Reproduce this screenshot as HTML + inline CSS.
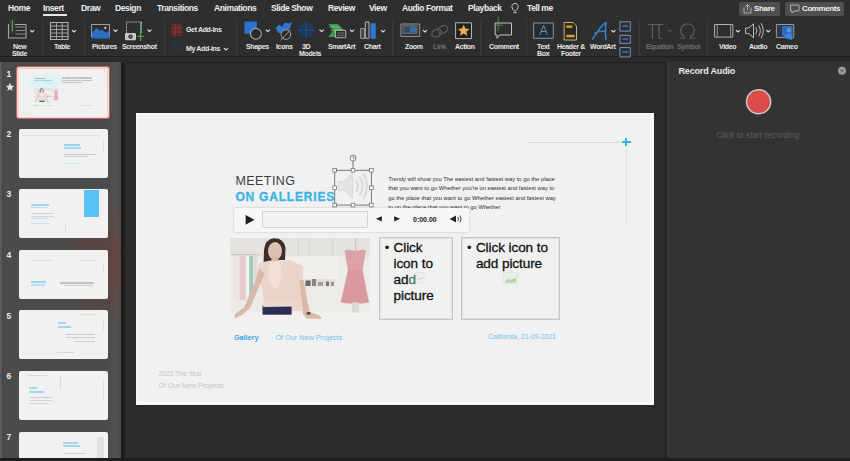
<!DOCTYPE html>
<html><head><meta charset="utf-8">
<style>
*{margin:0;padding:0;box-sizing:border-box}
html,body{width:850px;height:461px;overflow:hidden;background:#2a2a2a;font-family:"Liberation Sans",sans-serif;position:relative}
.a{position:absolute}
#ribbon{left:0;top:0;width:850px;height:62px;background:#2e2e2e}
.tab{position:absolute;top:3px;font-size:8.5px;line-height:10px;color:#efefef;font-weight:bold;white-space:nowrap;letter-spacing:-0.4px}
.lbl{position:absolute;font-size:7px;color:#e8e8e8;font-weight:bold;white-space:nowrap;line-height:7px;letter-spacing:-0.35px}
.dis{color:#6e6e6e}
.sep{position:absolute;top:20px;width:1px;height:35.5px;background:#3b3b3b}
#left{left:0;top:62px;width:121px;height:399px;background:#4b4b4b}
.th{position:absolute;left:19.2px;width:88.6px;height:49.2px;background:#f1f1f1;border-radius:2px;overflow:hidden}
.num{position:absolute;left:6.5px;font-size:8.5px;color:#ececec;font-weight:bold}
#slide{left:136px;top:113px;width:518px;height:292px;background:#f1f1f1;overflow:hidden}
#right{left:666px;top:62px;width:184px;height:399px;background:#333333;border-left:1.5px solid #1c1c1c;box-shadow:inset 2px 0 0 #383838}
.st{position:absolute;white-space:nowrap}
</style></head><body>
<div id="ribbon" class="a">
  <div class="a" style="left:0;top:55.5px;width:850px;height:1.6px;background:#1f1f1f"></div>
  <div class="a" style="left:0;top:57px;width:850px;height:4.5px;background:#2b2b2b"></div>
  <div class="a" style="left:0;top:61.5px;width:850px;height:1px;background:#1e1e1e"></div>
  <div class="tab" style="left:8px">Home</div>
  <div class="tab" style="left:43px">Insert</div>
  <div class="a" style="left:43px;top:14px;width:24px;height:2px;background:#e6e6e6"></div>
  <div class="tab" style="left:81px">Draw</div>
  <div class="tab" style="left:115px">Design</div>
  <div class="tab" style="left:157px">Transitions</div>
  <div class="tab" style="left:214px">Animations</div>
  <div class="tab" style="left:271px">Slide Show</div>
  <div class="tab" style="left:328px">Review</div>
  <div class="tab" style="left:369px">View</div>
  <div class="tab" style="left:402px">Audio Format</div>
  <div class="tab" style="left:468px">Playback</div>
  <div class="tab" style="left:527px">Tell me</div>
  <!-- share/comments -->
  <div class="a" style="left:739px;top:2px;width:41px;height:14px;background:#4f4f4f;border-radius:2px"></div>
  <div class="a" style="left:785px;top:2px;width:59px;height:14px;background:#4f4f4f;border-radius:2px"></div>
  <div class="tab" style="left:754px;top:4px;font-size:8px;letter-spacing:-0.3px">Share</div>
  <div class="tab" style="left:802px;top:4px;font-size:8px;letter-spacing:-0.4px">Comments</div>

  <!-- separators -->
  <div class="sep" style="left:42px"></div>
  <div class="sep" style="left:84px"></div>
  <div class="sep" style="left:164px"></div>
  <div class="sep" style="left:236px"></div>
  <div class="sep" style="left:392px"></div>
  <div class="sep" style="left:480px"></div>
  <div class="sep" style="left:526px"></div>
  <div class="sep" style="left:639px"></div>
  <div class="sep" style="left:707px"></div>

  <!-- labels -->
  <div class="lbl" style="left:13px;top:43.2px">New</div>
  <div class="lbl" style="left:12px;top:50.2px">Slide</div>
  <div class="lbl" style="left:54px;top:43.2px">Table</div>
  <div class="lbl" style="left:92px;top:43.2px">Pictures</div>
  <div class="lbl" style="left:122px;top:43.2px">Screenshot</div>
  <div class="lbl" style="left:186px;top:26.4px">Get Add-ins</div>
  <div class="lbl" style="left:186px;top:45px">My Add-ins</div>
  <div class="lbl" style="left:246px;top:43.2px">Shapes</div>
  <div class="lbl" style="left:276px;top:43.2px">Icons</div>
  <div class="lbl" style="left:302px;top:43.2px">3D</div>
  <div class="lbl" style="left:299px;top:50.2px">Models</div>
  <div class="lbl" style="left:328px;top:43.2px">SmartArt</div>
  <div class="lbl" style="left:364px;top:43.2px">Chart</div>
  <div class="lbl" style="left:405px;top:43.2px">Zoom</div>
  <div class="lbl dis" style="left:433px;top:43.2px">Link</div>
  <div class="lbl" style="left:455px;top:43.2px">Action</div>
  <div class="lbl" style="left:489px;top:43.2px">Comment</div>
  <div class="lbl" style="left:537px;top:43.2px">Text</div>
  <div class="lbl" style="left:537px;top:50.2px">Box</div>
  <div class="lbl" style="left:557px;top:43.2px">Header &amp;</div>
  <div class="lbl" style="left:561px;top:50.2px">Footer</div>
  <div class="lbl" style="left:590px;top:43.2px">WordArt</div>
  <div class="lbl dis" style="left:646px;top:43.2px">Equation</div>
  <div class="lbl dis" style="left:677px;top:43.2px">Symbol</div>
  <div class="lbl" style="left:719px;top:43.2px">Video</div>
  <div class="lbl" style="left:749px;top:43.2px">Audio</div>
  <div class="lbl" style="left:776px;top:43.2px">Cameo</div>
  <svg class="a" style="left:0;top:0" width="850" height="62" viewBox="0 0 850 62">
  <g fill="none" stroke-linecap="round" stroke-linejoin="round">
    <!-- chevrons -->
    <g stroke="#dadada" stroke-width="1.15">
      <path d="M30.5 30.3 L32.2 32 L33.9 30.3"/>
      <path d="M72.3 30.3 L74 32 L75.7 30.3"/>
      <path d="M113.8 29.8 L115.5 31.5 L117.2 29.8"/>
      <path d="M147.7 29.8 L149.4 31.5 L151.1 29.8"/>
      <path d="M266.1 30 L267.8 31.7 L269.5 30"/>
      <path d="M319.9 30 L321.6 31.7 L323.3 30"/>
      <path d="M350.3 30 L352 31.7 L353.7 30"/>
      <path d="M381.3 30.3 L383 32 L384.7 30.3"/>
      <path d="M423.3 30.3 L425 32 L426.7 30.3"/>
      <path d="M611.7 30.5 L613.4 32.2 L615.1 30.5"/>
      <path d="M736.3 30.3 L738 32 L739.7 30.3"/>
      <path d="M766.6 30.3 L768.3 32 L770 30.3"/>
      <path d="M224.3 48.3 L226 50 L227.7 48.3"/>
    </g>
    <!-- New slide -->
    <rect x="8.5" y="24.5" width="17.5" height="13.5" stroke="#a8a8a8" stroke-width="1.1"/>
    <path d="M16 27 H24.5 M16 30.5 H24.5 M16 34 H24.5" stroke="#8a8a8a" stroke-width="1"/>
    <rect x="9" y="19" width="6" height="14" fill="#2c3f2c" stroke="none"/>
    <path d="M12.3 20.5 V31" stroke="#7fae72" stroke-width="0.9"/>
    <!-- Table -->
    <rect x="50.5" y="22.5" width="17.5" height="17" stroke="#b0b0b0" stroke-width="1.1"/>
    <path d="M50.5 26 H68 M50.5 29.5 H68 M50.5 33 H68 M50.5 36.5 H68 M56.5 22.5 V39.5 M62.2 22.5 V39.5" stroke="#a0a0a0" stroke-width="1"/>
    <!-- Pictures -->
    <rect x="92" y="24.5" width="17.5" height="12.5" stroke="#a0a0a0" stroke-width="1"/>
    <path d="M92 36.5 L92 33 L96.5 27.8 L100 31 L102 29.5 L105.5 32.5 L109.5 31 V37.5 H92 Z" fill="#2b6fc4" stroke="none"/>
    <path d="M91.5 37.5 H110 V39 H91.5 Z" fill="#1f5aa8" stroke="none"/>
    <circle cx="105.3" cy="27.8" r="1.1" fill="#d8d8d8" stroke="none"/>
    <!-- Screenshot -->
    <path d="M126.5 34 V22 H141.5 V34" stroke="#9a9a9a" stroke-width="1" stroke-dasharray="1.6 1.4"/>
    <rect x="125" y="33" width="11" height="7.2" rx="1" fill="#c8c8c8" stroke="none"/>
    <circle cx="130.5" cy="36.6" r="2.2" fill="#2b2b2b" stroke="none"/>
    <circle cx="130.5" cy="36.6" r="1" fill="#888" stroke="none"/>
    <path d="M140.6 22.5 V40.5 M137.5 36.2 H143.8" stroke="#5fa85c" stroke-width="1.1"/>
    <!-- Get add-ins -->
    <rect x="171.5" y="24" width="11" height="12" fill="#5e2724" stroke="none"/>
    <path d="M171.5 28 H182.5 M171.5 32 H182.5 M175.2 24 V36 M178.9 24 V36" stroke="#8a3a33" stroke-width="0.9"/>
    <rect x="171.5" y="41" width="11" height="11" fill="#2a323c" stroke="none"/>
    <!-- Shapes -->
    <rect x="244.5" y="21.5" width="12.3" height="12.3" fill="#2a74cf" stroke="none"/>
    <circle cx="255.9" cy="33.8" r="5.4" fill="#2b2b2b" stroke="#a8a8a8" stroke-width="1.1"/>
    <!-- Icons -->
    <path d="M275.5 28 L279 24.5 L282 27 L285 22.5 L289 23.5 L292 22 L290.5 27 L288 31 L283 33.5 L278.5 33 Z" fill="#2f79d0" stroke="none"/>
    <circle cx="285.9" cy="34.6" r="4.8" fill="#2b2b2b" stroke="#a0a0a0" stroke-width="1"/>
    <path d="M281 40 L290.5 30" stroke="#a0a0a0" stroke-width="1"/>
    <!-- 3D models -->
    <circle cx="306.2" cy="30.2" r="8" fill="#1e3858" stroke="none"/>
    <path d="M298.5 30.2 H314 M306.2 22.5 V38" stroke="#2f4f75" stroke-width="0.9"/>
    <!-- SmartArt -->
    <path d="M328.3 24 H338 L344 30 L338 37 H328.3 L333.5 30 Z" fill="#3e9b4c" stroke="none"/>
    <path d="M330 27 H339 M331 30 H341" stroke="#8fd38a" stroke-width="0.8"/>
    <rect x="335.8" y="30.4" width="10" height="7.3" fill="#2b2b2b" stroke="#b5b5b5" stroke-width="1"/>
    <path d="M337.5 33 H344 M337.5 35.3 H344" stroke="#8a8a8a" stroke-width="0.8"/>
    <!-- Chart -->
    <rect x="361" y="28.5" width="3.5" height="9.8" fill="#444" stroke="#a8a8a8" stroke-width="0.9"/>
    <rect x="365.7" y="22" width="3.3" height="16.3" fill="#333" stroke="#c0c0c0" stroke-width="0.9"/>
    <rect x="370.5" y="23.3" width="5.3" height="15.5" fill="#2d76cf" stroke="none"/>
    <!-- Zoom -->
    <rect x="401.3" y="24" width="18.4" height="12.4" stroke="#9a9a9a" stroke-width="1"/>
    <rect x="403.5" y="25.8" width="13.5" height="7.5" fill="#3a4a5c" stroke="#7f8a95" stroke-width="0.8"/>
    <rect x="410" y="27" width="6" height="5.5" fill="#3a6aa8" stroke="none"/>
    <!-- Link -->
    <ellipse cx="436.5" cy="33" rx="5" ry="3.6" transform="rotate(-30 436.5 33)" stroke="#5a5a5a" stroke-width="1.3"/>
    <ellipse cx="443" cy="29.5" rx="5" ry="3.6" transform="rotate(-30 443 29.5)" stroke="#5a5a5a" stroke-width="1.3"/>
    <!-- Action -->
    <rect x="456" y="22.8" width="15.5" height="15.8" fill="#222" stroke="#c9c9c9" stroke-width="0.9"/>
    <path d="M463.7 24.8 L465.4 28.6 L469.4 29 L466.4 31.7 L467.3 35.7 L463.7 33.6 L460.1 35.7 L461 31.7 L458 29 L462 28.6 Z" fill="#eab14e" stroke="none"/>
    <!-- Comment -->
    <path d="M495.6 23 H511.5 V35 H499.5 L497 38.3 V35 H495.6 Z" stroke="#c4c4c4" stroke-width="1"/>
    <path d="M498.2 17 V30.5 M494 25.2 H502.5" stroke="#5b9150" stroke-width="0.9"/>
    <!-- Text box -->
    <rect x="534" y="23" width="19.3" height="15.3" fill="#1f2d38" stroke="#8696a3" stroke-width="1"/>
    <path d="M540 34.5 L543.6 25.5 L547.2 34.5 M541.3 31.5 H546" stroke="#7d8d9a" stroke-width="1"/>
    <!-- Header footer -->
    <path d="M564.5 22.5 H573 L576.5 26 V40 H564.5 Z" fill="#2a2a22" stroke="#c7b27a" stroke-width="1"/>
    <rect x="566.3" y="25.5" width="6" height="2.3" fill="#d9a13e" stroke="none"/>
    <rect x="566.3" y="34.8" width="8.3" height="2.5" fill="#d9a13e" stroke="none"/>
    <!-- WordArt -->
    <path d="M592.5 39 C597 33 601 25 606 22.5 C605 28 605 34 606 39.5 M595 33 C599 31 602 31.5 606 31" stroke="#3b7ed0" stroke-width="1.6"/>
    <!-- small column icons -->
    <rect x="620.3" y="21.8" width="10" height="9.3" fill="#223040" stroke="#8094a8" stroke-width="1"/>
    <rect x="620.3" y="35.3" width="10" height="8" fill="#223040" stroke="#8094a8" stroke-width="1"/>
    <rect x="620.3" y="47.6" width="10" height="9.3" fill="#223040" stroke="#8094a8" stroke-width="1"/>
    <path d="M622.5 26 H628 M623 39 H627.5 M622.5 52 H628" stroke="#8094a8" stroke-width="0.9"/>
    <!-- Equation -->
    <path d="M648.5 24.5 H663 M652.5 24.5 V38.5 M659 24.5 V37 Q659 38.5 661.5 38.5" stroke="#5e5e5e" stroke-width="1.2"/>
    <path d="M668 30.8 H671.2" stroke="#5e5e5e" stroke-width="1"/>
    <!-- Symbol -->
    <path d="M680 38 H684.5 V36.3 C679 34 679.5 24 687.5 24 C695.5 24 696 34 690.5 36.3 V38 H695" stroke="#5e5e5e" stroke-width="1.2"/>
    <!-- Video -->
    <rect x="715" y="24.5" width="17.8" height="12.6" stroke="#b2b2b2" stroke-width="1"/>
    <path d="M717.3 24.5 V37.1 M730.5 24.5 V37.1" stroke="#9a9a9a" stroke-width="0.9"/>
    <!-- Audio -->
    <path d="M746 28 H749 L753.5 23.8 V37.8 L749 33.6 H746 Z" stroke="#bdbdbd" stroke-width="1"/>
    <path d="M756 27.5 Q758 30.8 756 34 M758.8 25.5 Q762 30.8 758.8 36 M761.3 23.5 Q765.5 30.8 761.3 38" stroke="#bdbdbd" stroke-width="1"/>
    <!-- Cameo -->
    <rect x="776.8" y="24.5" width="17" height="13" fill="#2a3a4c" stroke="#9a9a9a" stroke-width="1"/>
    <rect x="782" y="26" width="10.5" height="10" fill="#2e6db8" stroke="none"/>
    <circle cx="789" cy="30" r="2.2" fill="#4c9aea" stroke="none"/>
    <path d="M784 38 Q786 32.5 789 33 Q792 33 792.5 40" fill="#3b85d8" stroke="none"/>
    <!-- share icon / comments icon -->
    <path d="M744 8 V13 H751 V8 M747.5 4.5 V10 M745.5 6.5 L747.5 4.5 L749.5 6.5" stroke="#bcbcbc" stroke-width="0.9"/>
    <path d="M791 5 H799 V11 H794 L792 13 V11 H791 Z" stroke="#bcbcbc" stroke-width="0.9"/>
    <!-- lightbulb -->
    <path d="M514.5 11 C511 9 511 3.5 515 3.5 C519 3.5 519 9 515.5 11 Z M513.8 12.7 H516.2" stroke="#d8d8d8" stroke-width="0.9"/>
  </g>
</svg>
</div>
<div id="left" class="a">
<div class="a" style="left:0;top:0;width:1.5px;height:399px;background:#5a5a5a"></div><div class="a" style="left:1.5px;top:0;width:1.5px;height:399px;background:#434343"></div>
<div class="a" style="left:109px;top:0;width:12px;height:399px;background:linear-gradient(90deg,rgba(255,255,255,0),rgba(255,255,255,0.04) 50%,rgba(255,255,255,0))"></div>
<div class="a" style="left:20px;top:130px;width:101px;height:130px;background:radial-gradient(ellipse 60px 70px at 92% 55%,rgba(125,55,45,0.45),rgba(125,55,45,0) 100%)"></div>
<div class="num" style="top:7.0px">1</div>
<div class="num" style="top:66.5px">2</div>
<div class="num" style="top:127.0px">3</div>
<div class="num" style="top:188.0px">4</div>
<div class="num" style="top:248.5px">5</div>
<div class="num" style="top:309.0px">6</div>
<div class="num" style="top:369.5px">7</div>
<svg class="a" style="left:4.5px;top:20px" width="10" height="10" viewBox="0 0 10 10"><path d="M5 0.8 L6.2 3.6 L9.2 3.9 L6.9 5.9 L7.6 8.9 L5 7.3 L2.4 8.9 L3.1 5.9 L0.8 3.9 L3.8 3.6 Z" fill="#e0e0e0"/></svg>
</div>
<div class="a" style="left:16.3px;top:66px;width:93.5px;height:53.3px;border:1.2px solid #c96262;border-radius:3px;background:#f3d2d0"></div>
<div class="a" style="left:19.3px;top:68.8px;width:88.2px;height:47.8px;background:#f1f1f1;overflow:hidden"><div class="a" style="left:4px;top:3px;width:46px;height:20px;background:radial-gradient(ellipse at 50% 50%,rgba(205,242,246,0.9),rgba(205,242,246,0) 75%)"></div><div class="a" style="left:0;top:0;width:518px;height:292px;transform:translate(-2.4px,-3.4px) scale(0.18);transform-origin:0 0;filter:blur(0.35px);opacity:0.75"><div class="st" style="left:99.4px;top:61.8px;font-size:12.5px;line-height:12.5px;color:#3d3d3d;letter-spacing:0.45px">MEETING</div>
<div class="st" style="left:99.4px;top:77.6px;font-size:12px;line-height:12px;color:#3cb4e6;font-weight:bold;letter-spacing:0.8px;-webkit-text-stroke:0.35px #3cb4e6">ON GALLERIES</div>
<div class="st" style="left:252.2px;top:61.5px;font-size:5.8px;line-height:9.55px;color:#2e2e2e">Trendy will show you The easiest and fastest way to go the place<br>that you want to go Whether you're on easiest and fastest way to<br>go the place that you want to go Whether easiest and fastest way<br>to go the place that you want to go Whether</div>
<div class="st" style="left:98px;top:220.8px;font-size:7.2px;line-height:7.2px;color:#3aa9df;font-weight:bold">Gallery</div>
<div class="st" style="left:139.4px;top:220.8px;font-size:7.3px;line-height:7.3px;color:#6cc3ea">Of Our New Projects</div>
<div class="st" style="left:352px;top:220.8px;font-size:6.9px;line-height:6.9px;color:#6cc3ea">California, 21-09-2021</div>
<div class="st" style="left:22.6px;top:258.2px;font-size:6.7px;line-height:6.7px;color:#c6c6c6">2022 The Year</div>
<div class="st" style="left:22.6px;top:269.6px;font-size:7.1px;line-height:7.1px;color:#c6c6c6">Of Our New Projects</div>
<div class="a" style="left:392.3px;top:29px;width:93px;height:1px;background:#dadada"></div>
<div class="a" style="left:489.7px;top:33.6px;width:1px;height:76px;background:#dedede"></div>
<div class="a" style="left:486px;top:28.2px;width:8.5px;height:1.8px;background:#3cb0e4"></div>
<div class="a" style="left:489.3px;top:24.9px;width:1.8px;height:8.5px;background:#3cb0e4"></div><svg class="a" style="left:94.4px;top:124.5px;filter:blur(0.55px)" width="140" height="81.5" viewBox="0 0 140 81.5">
  <rect width="140" height="81.5" fill="#edebe8"/>
  <rect x="0" y="0" width="140" height="18.5" fill="#e5e3e0"/>
  <rect x="68" y="0" width="1" height="18.5" fill="#d6d3cf"/>
  <rect x="79" y="0" width="1" height="18.5" fill="#d9d6d2"/>
  <rect x="102" y="0" width="1" height="18.5" fill="#d9d6d2"/>
  <rect x="56" y="18.5" width="52" height="22" fill="#f1efec"/>
  <rect x="1" y="16" width="28" height="1.2" fill="#cdc9c5"/>
  <rect x="3.5" y="18" width="4" height="42" fill="#efe4e2"/>
  <rect x="9.5" y="18" width="6" height="44" fill="#e6cccc"/>
  <rect x="16" y="18" width="3" height="40" fill="#f3f3f1"/>
  <rect x="19.3" y="18" width="3.8" height="44" fill="#9ecab8"/>
  <rect x="23.3" y="18" width="4.2" height="38" fill="#e3dcd9"/>
  <rect x="74.6" y="41" width="30" height="7.5" fill="#e3e0dc"/>
  <rect x="75.5" y="42.5" width="5" height="5.5" fill="#6d6864"/>
  <rect x="82" y="41" width="4" height="7" fill="#8c8680"/>
  <rect x="88" y="44" width="5" height="4" fill="#a6a09b"/>
  <rect x="96" y="43.5" width="3" height="4.5" fill="#7a7570"/>
  <rect x="101" y="44" width="3" height="4" fill="#9a948f"/>
  <rect x="0" y="74.5" width="140" height="7" fill="#f3f1ef"/>
  <!-- mannequin & dress -->
  <rect x="125" y="0" width="1.3" height="13" fill="#cbc6c2"/>
  <path d="M114.6 12.5 L119 11.5 Q125.6 14 132 11.5 L136 12.5 L132.5 33 L118 33 Z" fill="#dba1a7"/>
  <path d="M118 32 L132.5 32 L139 64.5 Q125 67 110.6 64.5 Z" fill="#d9999f"/>
  <rect x="122" y="64.5" width="7" height="10" fill="#dcd8d4"/>
  <!-- woman -->
  <path d="M33.4 29.5 L34 12 Q35 1 44 0.2 Q54 0 55.5 10 L55 22 L50 22 L40 24 L38 30 Z" fill="#3e2d29"/>
  <ellipse cx="45" cy="13" rx="7" ry="9" fill="#e0c1b1"/>
  <rect x="41.5" y="19" width="7" height="6" fill="#d8b5a4"/>
  <path d="M29 40 L28.6 25 L40 22.5 L50 23 L60 22 L72.8 28 L73 48 L71 73 L34.5 73 L32 50 Z" fill="#ebd4ca"/>
  <path d="M40 24 L50 24 L53 40 L45 52 L38 40 Z" fill="#f1e0d8"/>
  <path d="M29 30 L34.5 36 L20 70 L12 77 L4.6 80.5 L5 76 L14 69.5 L25 44 Z" fill="#dbb9a8"/>
  <path d="M69.5 42 L73.5 42 L79.5 74 L90 77.5 L91.5 81 L77 80.5 L73 76 Z" fill="#dab8a7"/>
  <rect x="76.8" y="74" width="3.6" height="2.6" fill="#5b4c42"/>
  <path d="M32.5 67.3 L61.6 67.3 L61.6 76.7 L32.5 76.7 Z" fill="#2c2f52"/>
  <path d="M34 64 L66 64 L66 68.5 L33 69 Z" fill="#ecd8cf"/>
</svg>
</div></div>
<div class="th" style="top:128.6px"><div class="a" style="left:0;top:0;width:89px;height:50px;opacity:0.78;filter:blur(0.3px)"><div class="a" style="left:45px;top:15.5px;width:16px;height:2px;background:#7ccbec"></div><div class="a" style="left:45px;top:18.5px;width:17px;height:2px;background:#8fd3f0"></div><div class="a" style="left:45px;top:25px;width:32px;height:1.2px;background:#bdbdbd"></div><div class="a" style="left:45px;top:27.5px;width:24px;height:1.2px;background:#c8c8c8"></div><div class="a" style="left:45px;top:34.5px;width:18px;height:1px;background:#c9e6f3"></div><div class="a" style="left:3px;top:6.5px;width:77px;height:0.6px;background:#e0e0e0"></div><div class="a" style="left:84px;top:10px;width:0.8px;height:14px;background:#dedede"></div></div></div>
<div class="th" style="top:189px"><div class="a" style="left:0;top:0;width:89px;height:50px;opacity:0.78;filter:blur(0.3px)"><div class="a" style="left:65px;top:0.7px;width:15px;height:27px;background:#2bb6f3"></div><div class="a" style="left:12px;top:14.5px;width:18px;height:2px;background:#8fd0ee"></div><div class="a" style="left:12px;top:17.5px;width:16px;height:1.5px;background:#a8daf1"></div><div class="a" style="left:12px;top:24px;width:23px;height:1px;background:#c8c8c8"></div><div class="a" style="left:12px;top:26.5px;width:23px;height:1px;background:#cdcdcd"></div><div class="a" style="left:12px;top:29px;width:16px;height:1px;background:#d0d0d0"></div><div class="a" style="left:12px;top:34px;width:19px;height:1px;background:#b9e0f2"></div><div class="a" style="left:46px;top:35px;width:0.8px;height:9px;background:#d8d8d8"></div></div></div>
<div class="th" style="top:249.6px"><div class="a" style="left:0;top:0;width:89px;height:50px;opacity:0.78;filter:blur(0.3px)"><div class="a" style="left:14px;top:10px;width:19px;height:1px;background:#d6d6d6"></div><div class="a" style="left:60px;top:10px;width:16px;height:1px;background:#d6d6d6"></div><div class="a" style="left:12px;top:31.5px;width:15px;height:1.8px;background:#86cdee"></div><div class="a" style="left:12px;top:34.5px;width:14px;height:1.5px;background:#a9dbf1"></div><div class="a" style="left:40.5px;top:32.5px;width:34px;height:1.5px;background:#b5b5b5"></div><div class="a" style="left:45px;top:35px;width:29px;height:1.2px;background:#c4c4c4"></div><div class="a" style="left:84px;top:12px;width:0.8px;height:12px;background:#dedede"></div></div></div>
<div class="th" style="top:310.2px"><div class="a" style="left:0;top:0;width:89px;height:50px;opacity:0.78;filter:blur(0.3px)"><div class="a" style="left:38.5px;top:12px;width:8px;height:2px;background:#8fd0ee"></div><div class="a" style="left:38.5px;top:15.5px;width:13px;height:2px;background:#8fd0ee"></div><div class="a" style="left:47px;top:24px;width:29px;height:1.3px;background:#bfbfbf"></div><div class="a" style="left:47px;top:27px;width:29px;height:1.3px;background:#c6c6c6"></div><div class="a" style="left:55px;top:31px;width:21px;height:1.2px;background:#cbcbcb"></div><div class="a" style="left:38px;top:42px;width:17px;height:1px;background:#d0d0d0"></div><div class="a" style="left:61px;top:4px;width:15px;height:1px;background:#d8d8d8"></div><div class="a" style="left:84px;top:10px;width:0.8px;height:12px;background:#dedede"></div></div></div>
<div class="th" style="top:371px"><div class="a" style="left:0;top:0;width:89px;height:50px;opacity:0.78;filter:blur(0.3px)"><div class="a" style="left:10px;top:16px;width:8px;height:2px;background:#8fd0ee"></div><div class="a" style="left:10px;top:19.5px;width:15px;height:2px;background:#8fd0ee"></div><div class="a" style="left:11px;top:26px;width:22px;height:1.2px;background:#c4c4c4"></div><div class="a" style="left:11px;top:29px;width:22px;height:1.2px;background:#c9c9c9"></div><div class="a" style="left:11px;top:32px;width:18px;height:1.2px;background:#cdcdcd"></div><div class="a" style="left:8px;top:4px;width:20px;height:1px;background:#d6d6d6"></div><div class="a" style="left:40.5px;top:5px;width:0.8px;height:14px;background:#d4d4d4"></div><div class="a" style="left:84px;top:8px;width:0.8px;height:22px;background:#dedede"></div></div></div>
<div class="th" style="top:431.6px"><div class="a" style="left:0;top:0;width:89px;height:50px;opacity:0.78;filter:blur(0.3px)"><div class="a" style="left:44px;top:10px;width:15px;height:2px;background:#8fd0ee"></div><div class="a" style="left:44px;top:13.5px;width:17px;height:2px;background:#8fd0ee"></div><div class="a" style="left:78px;top:5px;width:7px;height:25px;background:#dcdcdc"></div><div class="a" style="left:45px;top:21px;width:22px;height:1px;background:#cccccc"></div></div></div>
<div class="a" style="left:121px;top:62px;width:2px;height:399px;background:#1b1b1b"></div><div class="a" style="left:123px;top:62px;width:3px;height:399px;background:#222"></div>
<div class="a" style="left:126px;top:62px;width:1px;height:399px;background:#303030"></div>
<div id="slide" class="a"><div class="a" style="left:0;top:0;width:518px;height:292px;box-shadow:inset 1.5px 1.5px 0 #f9f9f9,inset -4px -3.5px 0 #f7f7f7"></div><div class="st" style="left:99.4px;top:61.8px;font-size:12.5px;line-height:12.5px;color:#3d3d3d;letter-spacing:0.45px">MEETING</div>
<div class="st" style="left:99.4px;top:77.6px;font-size:12px;line-height:12px;color:#3cb4e6;font-weight:bold;letter-spacing:0.8px;-webkit-text-stroke:0.35px #3cb4e6">ON GALLERIES</div>
<div class="st" style="left:252.2px;top:61.5px;font-size:5.8px;line-height:9.55px;color:#2e2e2e">Trendy will show you The easiest and fastest way to go the place<br>that you want to go Whether you're on easiest and fastest way to<br>go the place that you want to go Whether easiest and fastest way<br>to go the place that you want to go Whether</div>
<div class="st" style="left:98px;top:220.8px;font-size:7.2px;line-height:7.2px;color:#3aa9df;font-weight:bold">Gallery</div>
<div class="st" style="left:139.4px;top:220.8px;font-size:7.3px;line-height:7.3px;color:#6cc3ea">Of Our New Projects</div>
<div class="st" style="left:352px;top:220.8px;font-size:6.9px;line-height:6.9px;color:#6cc3ea">California, 21-09-2021</div>
<div class="st" style="left:22.6px;top:258.2px;font-size:6.7px;line-height:6.7px;color:#c6c6c6">2022 The Year</div>
<div class="st" style="left:22.6px;top:269.6px;font-size:7.1px;line-height:7.1px;color:#c6c6c6">Of Our New Projects</div>
<div class="a" style="left:392.3px;top:29px;width:93px;height:1px;background:#dadada"></div>
<div class="a" style="left:489.7px;top:33.6px;width:1px;height:76px;background:#dedede"></div>
<div class="a" style="left:486px;top:28.2px;width:8.5px;height:1.8px;background:#3cb0e4"></div>
<div class="a" style="left:489.3px;top:24.9px;width:1.8px;height:8.5px;background:#3cb0e4"></div><svg class="a" style="left:94.4px;top:124.5px;filter:blur(0.55px)" width="140" height="81.5" viewBox="0 0 140 81.5">
  <rect width="140" height="81.5" fill="#edebe8"/>
  <rect x="0" y="0" width="140" height="18.5" fill="#e5e3e0"/>
  <rect x="68" y="0" width="1" height="18.5" fill="#d6d3cf"/>
  <rect x="79" y="0" width="1" height="18.5" fill="#d9d6d2"/>
  <rect x="102" y="0" width="1" height="18.5" fill="#d9d6d2"/>
  <rect x="56" y="18.5" width="52" height="22" fill="#f1efec"/>
  <rect x="1" y="16" width="28" height="1.2" fill="#cdc9c5"/>
  <rect x="3.5" y="18" width="4" height="42" fill="#efe4e2"/>
  <rect x="9.5" y="18" width="6" height="44" fill="#e6cccc"/>
  <rect x="16" y="18" width="3" height="40" fill="#f3f3f1"/>
  <rect x="19.3" y="18" width="3.8" height="44" fill="#9ecab8"/>
  <rect x="23.3" y="18" width="4.2" height="38" fill="#e3dcd9"/>
  <rect x="74.6" y="41" width="30" height="7.5" fill="#e3e0dc"/>
  <rect x="75.5" y="42.5" width="5" height="5.5" fill="#6d6864"/>
  <rect x="82" y="41" width="4" height="7" fill="#8c8680"/>
  <rect x="88" y="44" width="5" height="4" fill="#a6a09b"/>
  <rect x="96" y="43.5" width="3" height="4.5" fill="#7a7570"/>
  <rect x="101" y="44" width="3" height="4" fill="#9a948f"/>
  <rect x="0" y="74.5" width="140" height="7" fill="#f3f1ef"/>
  <!-- mannequin & dress -->
  <rect x="125" y="0" width="1.3" height="13" fill="#cbc6c2"/>
  <path d="M114.6 12.5 L119 11.5 Q125.6 14 132 11.5 L136 12.5 L132.5 33 L118 33 Z" fill="#dba1a7"/>
  <path d="M118 32 L132.5 32 L139 64.5 Q125 67 110.6 64.5 Z" fill="#d9999f"/>
  <rect x="122" y="64.5" width="7" height="10" fill="#dcd8d4"/>
  <!-- woman -->
  <path d="M33.4 29.5 L34 12 Q35 1 44 0.2 Q54 0 55.5 10 L55 22 L50 22 L40 24 L38 30 Z" fill="#3e2d29"/>
  <ellipse cx="45" cy="13" rx="7" ry="9" fill="#e0c1b1"/>
  <rect x="41.5" y="19" width="7" height="6" fill="#d8b5a4"/>
  <path d="M29 40 L28.6 25 L40 22.5 L50 23 L60 22 L72.8 28 L73 48 L71 73 L34.5 73 L32 50 Z" fill="#ebd4ca"/>
  <path d="M40 24 L50 24 L53 40 L45 52 L38 40 Z" fill="#f1e0d8"/>
  <path d="M29 30 L34.5 36 L20 70 L12 77 L4.6 80.5 L5 76 L14 69.5 L25 44 Z" fill="#dbb9a8"/>
  <path d="M69.5 42 L73.5 42 L79.5 74 L90 77.5 L91.5 81 L77 80.5 L73 76 Z" fill="#dab8a7"/>
  <rect x="76.8" y="74" width="3.6" height="2.6" fill="#5b4c42"/>
  <path d="M32.5 67.3 L61.6 67.3 L61.6 76.7 L32.5 76.7 Z" fill="#2c2f52"/>
  <path d="M34 64 L66 64 L66 68.5 L33 69 Z" fill="#ecd8cf"/>
</svg>
<div class="a" style="left:243.2px;top:124px;width:74.3px;height:83.3px;border:1px solid #c6c6c6;box-shadow:inset 0 0 0 1px #e2e2e2"></div>
<div class="a" style="left:325.3px;top:124px;width:98.5px;height:83.3px;border:1px solid #c6c6c6;box-shadow:inset 0 0 0 1px #e2e2e2"></div>
<div class="st" style="left:248.8px;top:126.8px;font-size:13px;line-height:16.2px;color:#111">&bull;</div>
<div class="st" style="left:257.5px;top:126.8px;font-size:13.6px;line-height:16.2px;color:#111;-webkit-text-stroke:0.3px #111;letter-spacing:-0.1px">Click<br>icon to<br>ad<span style="color:#4f7f4f;-webkit-text-stroke-color:#4f7f4f">d</span><br>picture</div>
<div class="st" style="left:331px;top:126.8px;font-size:13px;line-height:16.2px;color:#111">&bull;</div>
<div class="st" style="left:339.9px;top:126.8px;font-size:13.6px;line-height:16.2px;color:#111;-webkit-text-stroke:0.3px #111;letter-spacing:-0.1px">Click icon to<br>add picture</div>
<!-- audio icon selection -->
<svg class="a" style="left:190px;top:38px" width="52" height="62" viewBox="190 38 52 62">
  <g fill="none">
  <path d="M202.5 68.5 H208 L216.5 60.5 V85.5 L208 77.5 H202.5 Z" fill="#e3e3e3" stroke="#d6d6d6" stroke-width="0.8"/>
  <path d="M220 67.5 Q224 73 220 78.5 M223.5 63.5 Q230 73 223.5 82.5 M227 60 Q235 73 227 86" stroke="#d8d8d8" stroke-width="1.8"/>
  <rect x="198.7" y="57.3" width="36.7" height="34.8" stroke="#6a6a6a" stroke-width="0.9"/>
  <path d="M217 57.3 V48" stroke="#6a6a6a" stroke-width="0.9"/>
  <circle cx="217" cy="45" r="3" fill="#fafafa" stroke="#777" stroke-width="0.9"/>
  <path d="M215.8 45 A1.3 1.3 0 1 1 217 46.3" stroke="#777" stroke-width="0.7"/>
  </g>
  <g fill="#fff" stroke="#777" stroke-width="0.8">
  <rect x="196.9" y="55.5" width="3.6" height="3.6"/>
  <rect x="215.2" y="55.5" width="3.6" height="3.6"/>
  <rect x="233.6" y="55.5" width="3.6" height="3.6"/>
  <rect x="196.9" y="72.9" width="3.6" height="3.6"/>
  <rect x="233.6" y="72.9" width="3.6" height="3.6"/>
  <rect x="196.9" y="90.3" width="3.6" height="3.6"/>
  <rect x="215.2" y="90.3" width="3.6" height="3.6"/>
  <rect x="233.6" y="90.3" width="3.6" height="3.6"/>
  </g>
</svg>
<!-- audio control bar -->
<div class="a" style="left:97.5px;top:95px;width:235px;height:23.7px;background:#f7f7f7;border-radius:2px;box-shadow:0 0 2px rgba(0,0,0,0.25)"></div>
<div class="a" style="left:126.4px;top:98px;width:105.8px;height:17.2px;background:#f3f3f5;border:1px solid #d4d4d4;border-radius:1px"></div>
<svg class="a" style="left:97px;top:95px" width="236" height="24" viewBox="97 95 236 24">
  <path d="M109.6 102 L118.5 106.8 L109.6 111.7 Z" fill="#1e1e1e"/>
  <path d="M240 105.8 L245.8 103.2 V108.4 Z" fill="#222"/>
  <path d="M264 105.8 L258.2 103.2 V108.4 Z" fill="#222"/>
  <path d="M313.7 106 L320 102.5 V109.5 Z" fill="#222"/>
  <path d="M321.8 104 Q323.2 106 321.8 108 M323.8 102.5 Q326.4 106 323.8 109.5" fill="none" stroke="#333" stroke-width="0.9"/>
</svg>
<div class="st" style="left:277px;top:103.2px;font-size:7px;line-height:7px;color:#1a1a1a;font-weight:bold">0:00.00</div>
<!-- picture placeholder icons -->
<svg class="a" style="left:270px;top:155px;filter:blur(0.4px)" width="120" height="20" viewBox="270 155 120 20">
  <rect x="281" y="159.3" width="7" height="10.5" fill="#eef2ec" fill-opacity="0.6" stroke="#d8e2d4" stroke-width="0.6"/>
  <path d="M282 167 L284 165 L285.5 166 L287.5 164" stroke="#a9c99c" stroke-width="0.8" fill="none"/>
  <rect x="367" y="159.3" width="14.5" height="11.5" fill="#e9f1e5" stroke="#d6e2d0" stroke-width="0.6"/>
  <path d="M369 168.5 L372.5 165.5 L375 167 L380 164.5 V169.5 H369 Z" fill="#b3d5a6" stroke="none"/>
</svg>
</div>
<div id="right" class="a">
<div class="st" style="left:11.5px;top:5px;font-size:9px;line-height:9px;color:#eaeaea;font-weight:bold;letter-spacing:-0.17px">Record Audio</div>
<svg class="a" style="left:169.5px;top:4px" width="10" height="10" viewBox="0 0 10 10"><circle cx="5" cy="4.8" r="4" fill="#9a9a9a"/><path d="M3.6 3.4 L6.4 6.2 M6.4 3.4 L3.6 6.2" stroke="#5a5a5a" stroke-width="0.9"/></svg>
<svg class="a" style="left:77.5px;top:26px" width="28" height="28" viewBox="0 0 28 28"><circle cx="13.6" cy="13.7" r="12.8" fill="#cfc9c9"/><circle cx="13.6" cy="13.7" r="11.3" fill="#dc4a4a"/></svg>
<div class="st" style="left:49.5px;top:68.5px;font-size:8.3px;line-height:8.3px;color:#5c5c5c">Click to start recording</div>
</div>
<div class="a" style="left:0;top:457.5px;width:850px;height:3.5px;background:#1e1e1e"></div>
</body></html>
